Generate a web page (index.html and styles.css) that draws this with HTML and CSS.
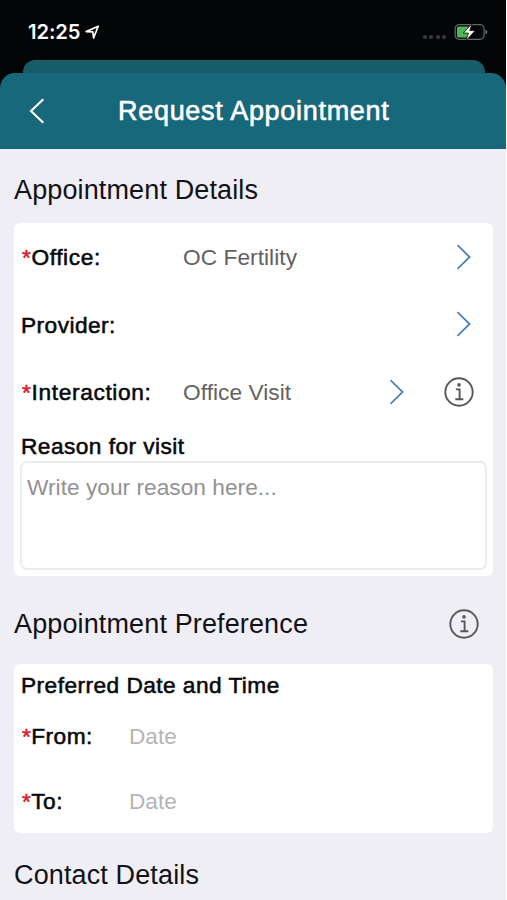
FILE: index.html
```html
<!DOCTYPE html>
<html lang="en">
<head>
<meta charset="utf-8">
<title>Request Appointment</title>
<link rel="stylesheet" href="styles.css">
</head>
<body>
<div class="screen">
  <div class="status">
    <span class="time">12:25</span>
    <svg class="loc" width="15" height="15" viewBox="0 0 15 15"><path d="M1.200 6.600 13.200 1.200 8.600 13 7.800 6.800Z" fill="none" stroke="#fff" stroke-width="1.700" stroke-linejoin="round"/></svg>
    <div class="dots"><i></i><i></i><i></i><i></i></div>
    <svg width="34" height="18" viewBox="0 0 34 18"><rect x="1.200" y="1.700" width="28.800" height="14.600" rx="4" fill="none" stroke="#67696b" stroke-width="1.200"/><path d="M31.400 6.400q2 .8 2 2.600t-2 2.600z" fill="#67696b"/><path d="M4.500 3.600h10v10.900h-10Q3 14.500 3 13V5.100Q3 3.600 4.500 3.600Z" fill="#4fb556"/><path d="M18.200 .3 9.400 10.100h5l-2.400 7.600 9.200-10.100h-5.400Z" fill="#fff" stroke="#030506" stroke-width=".8"/></svg>
  </div>
  <div class="back-sheet"></div>
  <div class="header">
    <svg class="back" width="16" height="26" viewBox="0 0 16 26"><path d="M14.300 1.200 2 13 14.300 24.800" fill="none" stroke="#fff" stroke-width="2.100"/></svg>
    <h1>Request Appointment</h1>
  </div>
  <main>
    <h2>Appointment Details</h2>
    <section class="card details">
      <div class="row"><span class="label office"><b>*</b>Office:</span><span class="value">OC Fertility</span><svg class="chev" width="15" height="26" viewBox="0 0 15 26"><path d="M1.500 1.200 13.600 13 1.500 24.800"/></svg></div>
      <div class="row"><span class="label provider">Provider:</span><span class="value"></span><svg class="chev" width="15" height="26" viewBox="0 0 15 26"><path d="M1.500 1.200 13.600 13 1.500 24.800"/></svg></div>
      <div class="row"><span class="label interaction"><b>*</b>Interaction:</span><span class="value">Office Visit</span><svg class="chev mid" width="15" height="26" viewBox="0 0 15 26"><path d="M1.500 1.200 13.600 13 1.500 24.800"/></svg><svg class="info" width="30" height="30" viewBox="0 0 30 30"><circle cx="15" cy="15" r="13.700"/><path d="M11.900 12.400h3.700v9.800M11.300 22.200h8"/><circle class="dot" cx="15" cy="7.900" r="1.800"/></svg></div>
      <div class="label reason">Reason for visit</div>
      <div class="box">Write your reason here...</div>
    </section>
    <div class="pref"><h2>Appointment Preference</h2><svg class="info" width="30" height="30" viewBox="0 0 30 30"><circle cx="15" cy="15" r="13.700"/><path d="M11.900 12.400h3.700v9.800M11.300 22.200h8"/><circle class="dot" cx="15" cy="7.900" r="1.800"/></svg></div>
    <section class="card dates">
      <div class="label subtitle">Preferred Date and Time</div>
      <div class="date-row"><span class="label"><b>*</b>From:</span><span class="date">Date</span></div>
      <div class="date-row"><span class="label"><b>*</b>To:</span><span class="date">Date</span></div>
    </section>
    <h2 class="contact">Contact Details</h2>
  </main>
</div>
</body>
</html>
```
FILE: styles.css
```css
* { box-sizing: border-box; }
body { margin: 0; background: #fff; font-family: "Liberation Sans", Arial, sans-serif; overflow: hidden; }
.screen { width: 506px; height: 900px; overflow: hidden; background: linear-gradient(#030506 0 120px, #efeef4 120px); }
.status { height: 60px; display: flex; align-items: center; padding: 4px 19px 0 28px; color: #fff; }
.time { font: 600 20.2px/24px Inter, sans-serif; width: 57px; white-space: nowrap; letter-spacing: -.1px; }
.loc { margin-left: 0; }
.dots { display: flex; gap: 2.3px; margin: 10px 8px 0 auto; }
.dots i { width: 4px; height: 4px; border-radius: 50%; background: #3b3c3e; }
.dots + svg { flex: none; margin-right: -1px; }
.back-sheet { height: 13px; margin: 0 21px 0 23px; border-radius: 12px 12px 0 0; background: #175d69; }
.header { height: 76px; border-radius: 15px 15px 0 0; background: #17687a; color: #fff; display: flex; align-items: center; padding-left: 29px; }
.back { flex: none; margin-right: 73px; }
h1 { margin: 0; padding-bottom: 1px; font-size: 27px; line-height: 34px; font-weight: 400; letter-spacing: .7px; -webkit-text-stroke: .6px #fff; white-space: nowrap; }
main { padding: 0 13px 0 14px; }
h2 { margin: 0; font-size: 27px; line-height: 30px; font-weight: 400; letter-spacing: .13px; color: #111118; white-space: nowrap; }
main > h2:first-child { padding-top: 26px; height: 74px; }
.card { background: #fff; border-radius: 6px; }
.details { height: 353px; padding: 0 7px; }
.row { height: 67.5px; display: flex; align-items: center; padding: 0 15px 0 1px; }
.label { font-size: 22.7px; line-height: 26px; letter-spacing: .45px; color: #08080a; -webkit-text-stroke: .55px #08080a; white-space: nowrap; }
.label b { font-weight: 400; color: #d8232f; -webkit-text-stroke-color: #d8232f; }
.row .label { width: 161px; }
.office { letter-spacing: .6px; }
.interaction { letter-spacing: .65px; }
.row .provider { margin-left: -1px; width: 162px; padding-top: 2px; }
.value { flex: 1; font-size: 22.7px; line-height: 26px; letter-spacing: .05px; color: #626262; white-space: nowrap; }
.chev { flex: none; fill: none; stroke: #4a83bd; stroke-width: 1.8; }
.mid { margin-right: 40px; }
.row .info { margin-right: -3px; }
.info { flex: none; fill: none; stroke: #57575a; stroke-width: 1.9; }
.info .dot { fill: #57575a; stroke: none; }
.reason { height: 26px; margin-top: 7px; }
.box { height: 109px; margin: 2px -1px 0 -1px; border: 2px solid #ececee; border-radius: 7px; padding: 11px 5px; font-size: 22.7px; line-height: 26px; color: #929292; letter-spacing: .02px; }
.pref { height: 88px; display: flex; align-items: center; justify-content: space-between; padding: 8px 14px 0 0; }
.dates { height: 169px; padding: 8px 7px 0; }
.subtitle { height: 26px; }
.date-row { display: flex; align-items: center; height: 65px; padding-left: 1px; }
.date-row .label { width: 107px; padding-bottom: 2px; }
.subtitle + .date-row { margin-top: 6px; }
.date { font-size: 22.6px; line-height: 26px; color: #b5b5b5; }
.contact { padding-top: 27px; }
```
